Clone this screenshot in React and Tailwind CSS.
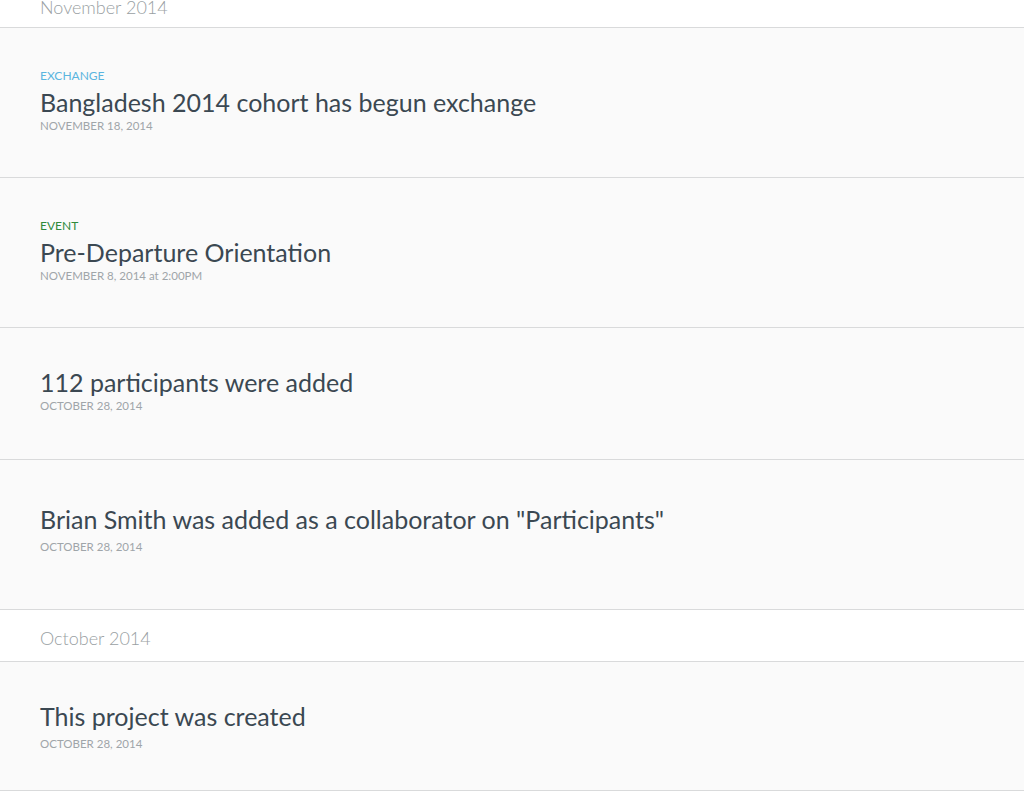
const months = [
  {
    label: "November 2014",
    first: true,
    items: [
      {
        kind: "exchange",
        title: "Bangladesh 2014 cohort has begun exchange",
        date: "November 18, 2014",
      },
      {
        kind: "event",
        title: "Pre-Departure Orientation",
        date: "November 8, 2014",
        time: "at 2:00PM",
      },
      { title: "112 participants were added", date: "October 28, 2014" },
      {
        title: 'Brian Smith was added as a collaborator on "Participants"',
        date: "October 28, 2014",
        loose: true,
      },
    ],
  },
  {
    label: "October 2014",
    items: [
      {
        title: "This project was created",
        date: "October 28, 2014",
        last: true,
      },
    ],
  },
];

function ActivityItem({ item }) {
  // padding differs a bit per row type, matches the feed as rendered
  let pad = "pt-[41px] pb-[46px]";
  if (item.kind) pad = "pt-[41px] pb-[44px]";
  if (item.loose) pad = "pt-[46px] pb-[55px]";
  if (item.last) pad = "pt-[41px] pb-[39px]";

  return (
    <div className={`border-b border-[#d9dadb] bg-[#fafafa] px-10 ${pad}`}>
      {item.kind === "exchange" && (
        <p className="h-[14px] text-[12px] leading-[13px] uppercase text-[#5ab5df]">
          Exchange
        </p>
      )}
      {item.kind === "event" && (
        <p className="h-[14px] text-[12px] leading-[14px] uppercase text-[#2f8a3b]">
          Event
        </p>
      )}
      <h3
        className={`text-[25px] leading-[26px] text-[#3b4852] ${
          item.kind ? "mt-[6px]" : ""
        }`}
      >
        {item.title}
      </h3>
      <p
        className={`text-[11.5px] leading-[14px] text-[#9fa5a9] ${
          item.loose || item.last ? "mt-[8px]" : "mt-[4px]"
        }`}
      >
        <span className="uppercase">{item.date}</span>
        {item.time && <span> {item.time}</span>}
      </p>
    </div>
  );
}

export default function App() {
  return (
    <div
      className="min-h-screen overflow-hidden bg-white"
      style={{ fontFamily: "Lato, 'Open Sans', sans-serif" }}
    >
      <div className="-mt-[24px]">
        {months.map((month) => (
          <section key={month.label}>
            <div
              className={`h-[52px] border-b border-[#d9dadb] bg-white px-10 ${
                month.first ? "pt-[17px]" : "pt-[14px]"
              }`}
            >
              <h2 className="text-[18px] leading-[28px] font-light text-[#9a9fa3]">
                {month.label}
              </h2>
            </div>
            {month.items.map((item) => (
              <ActivityItem key={item.title} item={item} />
            ))}
          </section>
        ))}
      </div>
    </div>
  );
}
